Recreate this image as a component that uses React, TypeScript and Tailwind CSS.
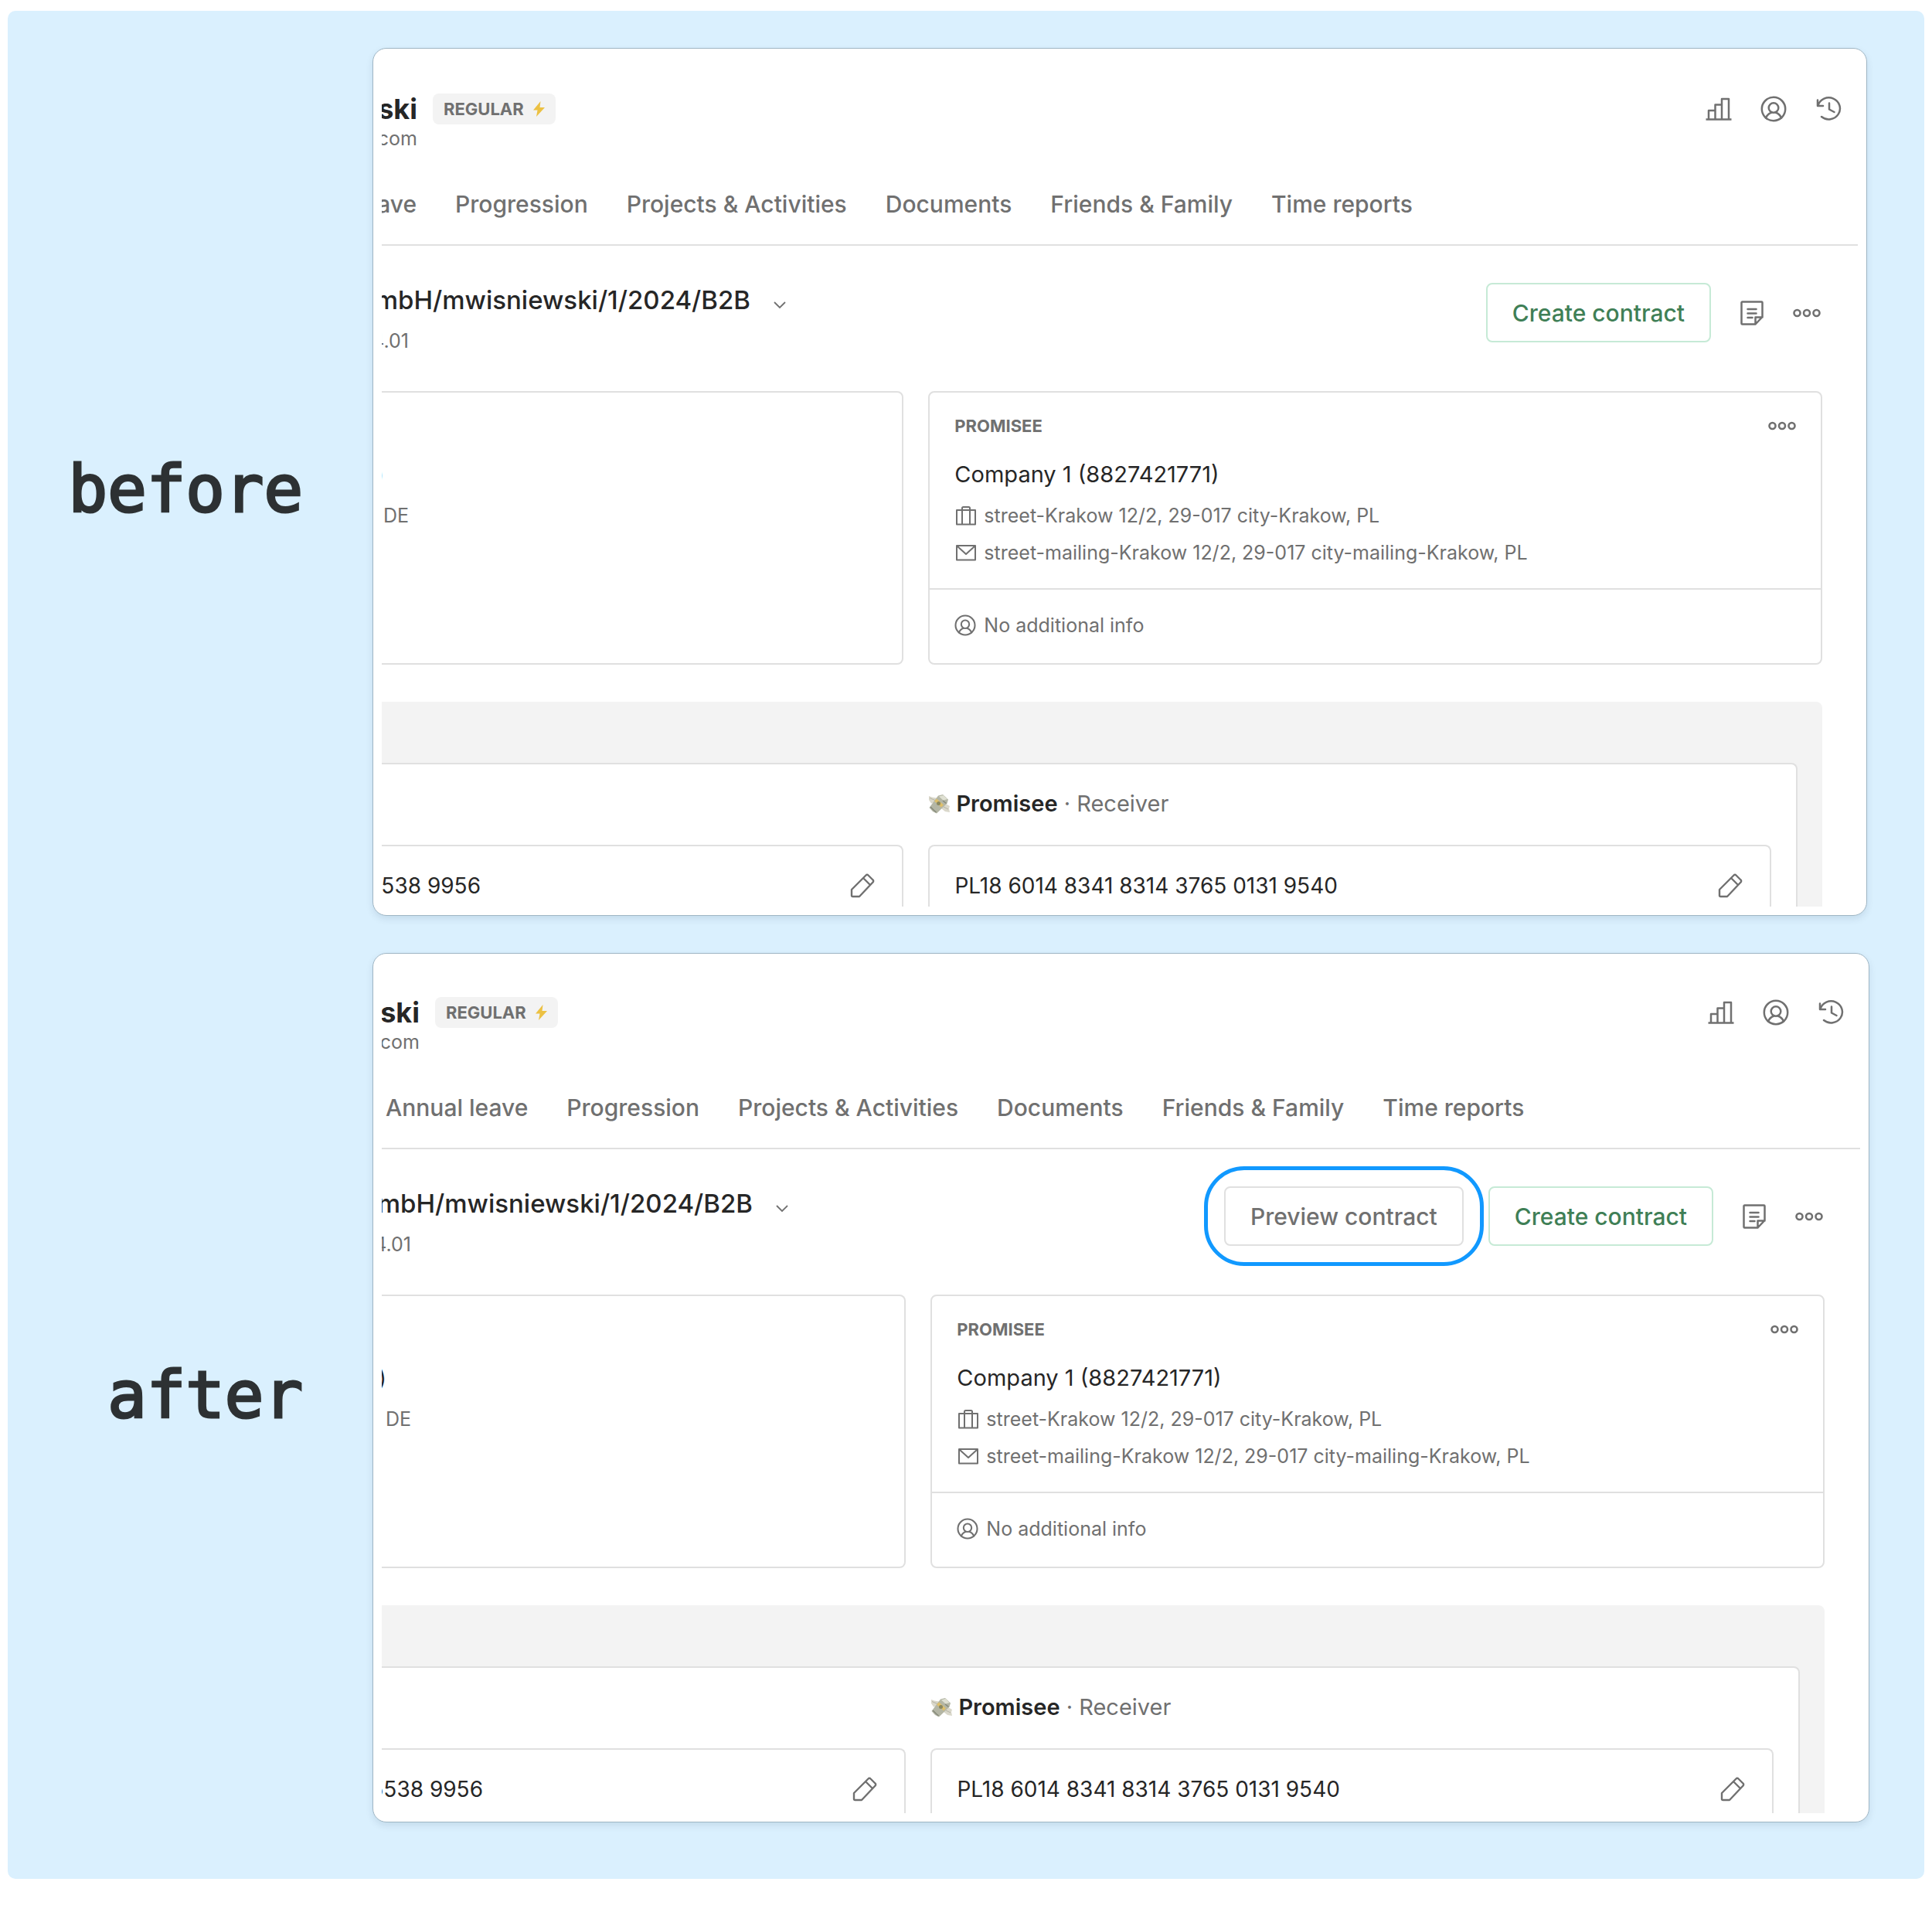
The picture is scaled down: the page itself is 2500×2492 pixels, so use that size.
import type { ReactNode } from "react";
import clsx from "clsx";

type PanelProps = {
  firstTab: string;
  tabsClassName: string;
  contentClassName: string;
  accountClassName: string;
  className: string;
  showPreview?: boolean;
};

type IconProps = {
  className?: string;
};

const tabs = [
  "Progression",
  "Projects & Activities",
  "Documents",
  "Friends & Family",
  "Time reports",
];

const ChartIcon = () => (
  <svg className="h-[34px] w-[34px]" viewBox="0 0 34 34" fill="none" stroke="currentColor" strokeWidth="2.5" strokeLinejoin="round">
    <path d="M.5 30.5h33M4 30.5V19h8.500M12.500 30.500V11.500H21M21 30.500V4h9v26.500" />
  </svg>
);

const PersonIcon = ({ className = "h-[34px] w-[34px]" }: IconProps) => (
  <svg className={className} viewBox="0 0 34 34" fill="none" stroke="currentColor" strokeWidth="2.500" strokeLinecap="round">
    <circle cx="17" cy="17" r="15.200" />
    <circle cx="17" cy="15.500" r="6.300" />
    <path d="M7 28.500c1.500-4 4.500-6 7.500-7M27 28.500c-1.500-4-4.500-6-7.500-7" />
  </svg>
);

const HistoryIcon = () => (
  <svg className="h-[34px] w-[34px]" viewBox="0 0 34 34" fill="none" stroke="currentColor" strokeWidth="2.500" strokeLinecap="round" strokeLinejoin="round">
    <path d="M3 5.500v7.500h7M3.500 12.500A14.500 14 0 1 1 8 27M18 9.500v8l6.500 3.500" />
  </svg>
);

const NoteIcon = () => (
  <svg className="h-[34px] w-[30px]" viewBox="0 0 30 34" fill="none" stroke="currentColor" strokeWidth="2.500" strokeLinejoin="round" strokeLinecap="round">
    <path d="M2.500 2.500h25a1 1 0 0 1 1 1V22l-9 9.500h-17a1 1 0 0 1-1-1v-27a1 1 0 0 1 1-1zM28.500 22.500h-9v9M9.500 12h11M9.500 17.500h11M9.500 23h6" />
  </svg>
);

const DotsIcon = () => (
  <svg className="h-3 w-[36px]" viewBox="0 0 36 12" fill="none" stroke="currentColor" strokeWidth="2.600">
    <circle cx="5.500" cy="6" r="4" />
    <circle cx="18" cy="6" r="4" />
    <circle cx="30.500" cy="6" r="4" />
  </svg>
);

const PencilIcon = () => (
  <svg className="h-8 w-8" viewBox="0 0 32 32" fill="none" stroke="currentColor" strokeWidth="2.400" strokeLinejoin="round">
    <path d="M2 21 20.500 2.500a2 2 0 0 1 3 0l6 6a2 2 0 0 1 0 3L12 30H3.500A1.500 1.500 0 0 1 2 28.500zM17 6l9 9" />
  </svg>
);

const SuitcaseIcon = () => (
  <svg className="h-7 w-7" viewBox="0 0 28 28" fill="none" stroke="currentColor" strokeWidth="2" strokeLinejoin="round">
    <path d="M3 7h24v18.500H3zM10 25V4.500A1.500 1.500 0 0 1 11.500 3h7A1.500 1.500 0 0 1 20 4.500V25" />
  </svg>
);

const MailIcon = () => (
  <svg className="h-7 w-7" viewBox="0 0 28 28" fill="none" stroke="currentColor" strokeWidth="2" strokeLinejoin="round">
    <path d="M3 5h24v18.500H3zM3.500 5.500 15 16 26.500 5.500" />
  </svg>
);

const BoltIcon = () => (
  <svg className="h-5 w-[15px]" viewBox="0 0 15 20" fill="#ecc143">
    <path d="M9.500 0 0 11.500h5.500L4 20 15 8H8.500z" />
  </svg>
);

const MoneyIcon = () => (
  <svg className="h-7 w-7" viewBox="0 0 28 28">
    <path d="M1 4l4 1.500 6 1-1 6-6 1L1 9z" fill="#dad8cb" />
    <path d="M18 15l5-1 5 3-1 3 1 5-6-1-5-4z" fill="#dad8cb" />
    <path d="M2 6.500l7 3M20 18l6 3" stroke="#b5b3a4" strokeWidth="1" />
    <path d="M13 3.500 19 2l7 6.500-1.500 5L11 26.500 6 24l-4.500-5z" fill="#b4b6a5" />
    <path d="M14 4.500 19.500 3l5.500 5-5.500 1.500z" fill="#dfe0d2" />
    <path d="M3 18l4.500 4.500L10.500 25M19 10l4.500 3.500" fill="none" stroke="#85897a" strokeWidth="1.500" />
    <path d="M8 10.500 11 7.500l9 8-3 3z" fill="#dfc06a" />
    <circle cx="13.500" cy="13.500" r="2.500" fill="#8a8860" />
  </svg>
);

const InfoRow = ({ icon, children }: { icon: ReactNode; children: ReactNode }) => (
  <div className="flex items-center gap-[10px] text-[25px] leading-7">
    {icon}
    <span className="whitespace-nowrap">{children}</span>
  </div>
);

const Account = ({ number, className }: { number: ReactNode; className: string }) => (
  <div
    className={clsx(
      "flex items-center justify-between border-r-2 border-t-2 border-[#e0e0e0] pr-[35px] pt-[35px]",
      className
    )}
  >
    <span className="whitespace-nowrap text-[28px] leading-8 text-[#262626]">{number}</span>
    <button type="button" aria-label="Edit account">
      <PencilIcon />
    </button>
  </div>
);

const Panel = ({
  firstTab,
  tabsClassName,
  contentClassName,
  accountClassName,
  className,
  showPreview,
}: PanelProps) => (
  <section
    className={clsx(
      "min-w-0 flex-1 rounded-[18px] border border-[#9fb6c4] bg-white p-[11px] text-[#707070] shadow-[0_4px_10px_rgba(0,40,70,0.10)]",
      className
    )}
  >
    <div className="overflow-hidden">
      <div className={contentClassName}>
        <header className="flex items-start justify-between pr-[21px]">
          <div>
            <div className="flex h-10 items-center gap-5">
              <h2 className="flex w-[49px] justify-end overflow-hidden text-[36px] font-bold leading-10 text-[#262626]">
                ski
              </h2>
              <span className="flex h-10 items-center gap-3 rounded-lg bg-[#f3f3f3] px-[14px] text-[22px] font-bold leading-6">
                REGULAR
                <BoltIcon />
              </span>
            </div>
            <p className="mt-1 flex w-[49px] justify-end overflow-hidden text-[25px] leading-7">com</p>
          </div>
          <div className="flex h-10 items-center gap-[37px]">
            <button type="button" aria-label="Statistics">
              <ChartIcon />
            </button>
            <button type="button" aria-label="Account">
              <PersonIcon />
            </button>
            <button type="button" aria-label="History">
              <HistoryIcon />
            </button>
          </div>
        </header>

        <nav className="mt-[55px] flex gap-[50px] border-b-2 border-[#e0e0e0] pb-9 text-[30px] font-medium leading-8">
          <a href="#leave" className={clsx("flex justify-end overflow-hidden whitespace-nowrap", tabsClassName)}>
            {firstTab}
          </a>
          {tabs.map((tab) => (
            <a key={tab} href="#tab" className="whitespace-nowrap">
              {tab}
            </a>
          ))}
        </nav>

        <div className="mt-12 flex items-start justify-between pr-12">
          <div>
            <div className="flex items-end gap-[30px]">
              <h3 className="flex w-[480px] justify-end overflow-hidden whitespace-nowrap text-[33px] font-medium leading-[44px] text-[#262626]">
                mbH/mwisniewski/1/2024/B2B
              </h3>
              <button type="button" aria-label="Choose contract" className="pb-2">
                <svg className="h-4 w-4" viewBox="0 0 16 16" fill="none" stroke="currentColor" strokeWidth="1.800">
                  <path d="m1 5 7 7 7-7" />
                </svg>
              </button>
            </div>
            <p className="mt-[17px] flex w-[38px] justify-end overflow-hidden text-[25px] leading-7">4.01</p>
          </div>
          <div className="flex items-center gap-[38px]">
            <div className="flex gap-8">
              {showPreview && (
                <div className="relative">
                  <button
                    type="button"
                    className="h-[77px] rounded-lg border-2 border-[#e0e0e0] px-8 text-[30px] font-medium leading-8"
                  >
                    Preview contract
                  </button>
                  <span className="pointer-events-none absolute -inset-[26px] rounded-[52px] border-[5px] border-[#1199ff]" />
                </div>
              )}
              <button
                type="button"
                className="h-[77px] rounded-lg border-2 border-[#c6ead6] px-8 text-[30px] font-medium leading-8 text-[#3f7f56]"
              >
                Create contract
              </button>
            </div>
            <button type="button" aria-label="Notes">
              <NoteIcon />
            </button>
            <button type="button" aria-label="More actions">
              <DotsIcon />
            </button>
          </div>
        </div>

        <div className="mr-[46px] mt-[51px] grid grid-cols-[678fr_1156fr] gap-8">
          <div className="rounded-r-lg border-2 border-l-0 border-[#e0e0e0] pt-[90px]">
            <p className="flex w-[6px] justify-end overflow-hidden text-[29px] leading-8 text-[#262626]">)</p>
            <p className="mt-[23px] flex w-[38px] justify-end overflow-hidden text-[25px] leading-7">DE</p>
          </div>
          <div className="rounded-lg border-2 border-[#e0e0e0]">
            <div className="border-b-2 border-[#e0e0e0] px-8 pb-8 pt-[31px]">
              <div className="flex items-center justify-between">
                <h4 className="text-[22px] font-bold leading-6">PROMISEE</h4>
                <button type="button" aria-label="Promisee actions">
                  <DotsIcon />
                </button>
              </div>
              <p className="mb-[23px] mt-[35px] text-[29px] leading-8 text-[#262626]">Company 1 (8827421771)</p>
              <div className="flex flex-col gap-5">
                <InfoRow icon={<SuitcaseIcon />}>street-Krakow 12/2, 29-017 city-Krakow, PL</InfoRow>
                <InfoRow icon={<MailIcon />}>
                  street-mailing-Krakow 12/2, 29-017 city-mailing-Krakow, PL
                </InfoRow>
              </div>
            </div>
            <div className="px-8 pb-[35px] pt-8">
              <InfoRow icon={<PersonIcon className="h-7 w-7" />}>No additional info</InfoRow>
            </div>
          </div>
        </div>

        <div className="mr-[46px] mt-12 rounded-tr-lg bg-[#f3f3f3] pr-8 pt-[79px]">
          <div className="rounded-tr-lg border-r-2 border-t-2 border-[#e0e0e0] bg-white pr-8 pt-[35px]">
            <div className="grid grid-cols-[678fr_1090fr] gap-x-8">
              <p className="col-start-2 mb-[37px] flex items-center gap-2 whitespace-nowrap text-[29px] leading-8">
                <MoneyIcon />
                <span>
                  <strong className="font-semibold text-[#262626]">Promisee</strong> · Receiver
                </span>
              </p>
              <div className="col-start-1">
                <Account
                  number={<span className="flex w-[131px] justify-end overflow-hidden">5538 9956</span>}
                  className={clsx("rounded-tr-lg", accountClassName)}
                />
              </div>
              <Account
                number="PL18 6014 8341 8314 3765 0131 9540"
                className={clsx("rounded-t-lg border-l-2 pl-8", accountClassName)}
              />
            </div>
          </div>
        </div>
      </div>
    </div>
  </section>
);

const Label = ({ children }: { children: string }) => (
  <h1 className="w-[472px] shrink-0 pr-[90px] pt-[18px] text-right font-['DejaVu_Sans_Mono',monospace] text-[84px] leading-none text-[#2d3133] [-webkit-text-stroke:3px_#2d3133]">
    {children}
  </h1>
);

export default function App() {
  return (
    <main className="bg-white px-[10px] pb-[62px] pt-[14px] font-['Inter',sans-serif]">
      <div className="flex flex-col gap-12 rounded-[10px] bg-[#daf0fe] pb-[73px] pt-12">
        <div className="flex items-center">
          <Label>before</Label>
          <Panel
            firstTab="ave"
            tabsClassName="w-12"
            contentClassName="-ml-[3px] pt-[47px]"
            accountClassName="pb-[11px]"
            className="mr-[74px]"
          />
        </div>
        <div className="flex items-center">
          <Label>after</Label>
          <Panel
            firstTab="Annual leave"
            tabsClassName="pl-[5px]"
            contentClassName="pt-[45px]"
            accountClassName="pb-[15px]"
            className="mr-[71px]"
            showPreview
          />
        </div>
      </div>
    </main>
  );
}
